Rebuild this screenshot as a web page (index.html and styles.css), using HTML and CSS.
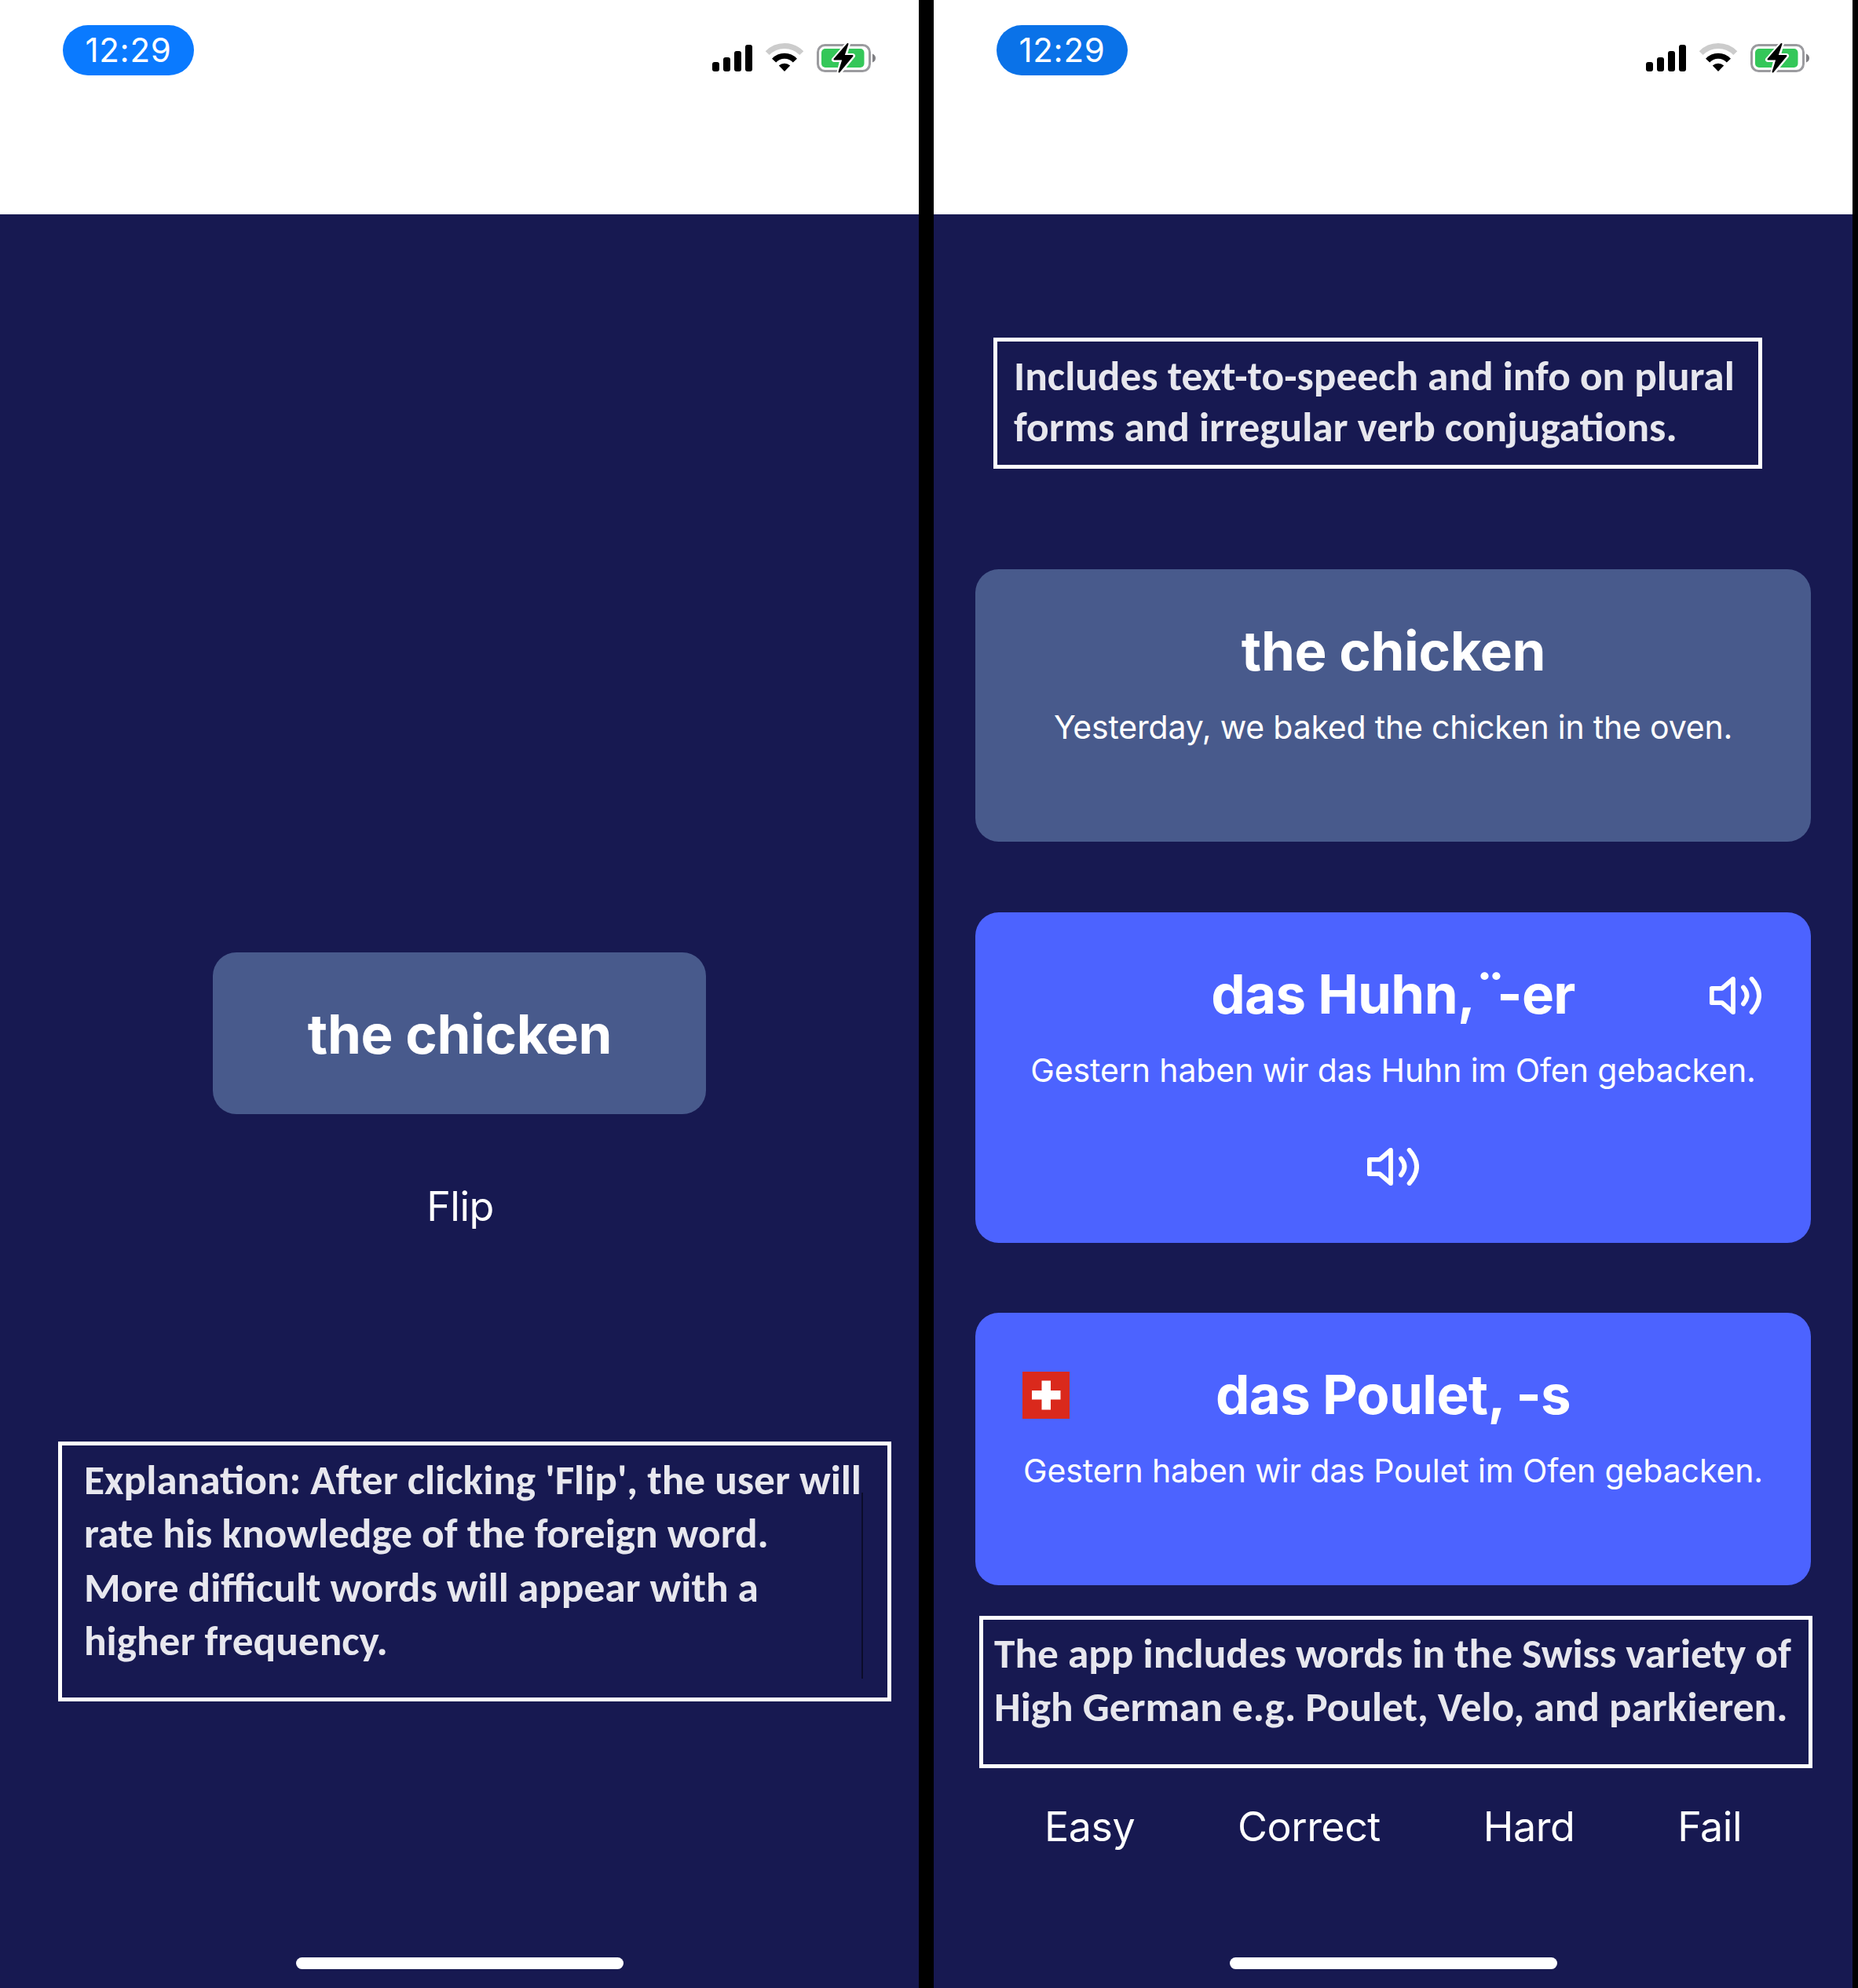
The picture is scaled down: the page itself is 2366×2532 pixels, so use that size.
FILE: index.html
```html
<!DOCTYPE html>
<html lang="en">
<head>
<meta charset="utf-8">
<title>Flashcards</title>
<link rel="stylesheet" href="styles.css">
</head>
<body>
<svg class="defs" aria-hidden="true">
  <symbol id="status" viewBox="905 52 212 44">
    <rect x="907" y="79" width="9" height="12" rx="3"/>
    <rect x="921" y="73" width="9" height="18" rx="3"/>
    <rect x="935" y="65" width="9" height="26" rx="3"/>
    <rect x="949" y="57" width="9" height="34" rx="3"/>
    <path d="M977.2 67.6a30.6 30.6 0 0 1 43.6 0" fill="none" stroke="#cccccc" stroke-width="7"/>
    <path d="M985.6 77.2a18.2 18.2 0 0 1 26.8 0" fill="none" stroke="#000" stroke-width="7"/>
    <path d="M999 91l-7.2-7.4a10.4 10.4 0 0 1 14.4 0z"/>
    <rect x="1041.5" y="57.5" width="66" height="33" rx="9" fill="none" stroke="#9b9b9f" stroke-width="3"/>
    <path d="M1111 68.500q4 1.500 4 5.500t-4 5.500z" fill="#808084"/>
    <rect x="1046" y="62" width="54.500" height="24" rx="5" fill="#34c759"/>
    <path d="M1080 55.500 1062 76h10.500l-4 16.500L1086 71h-10.500z" stroke="#fff" stroke-width="6" stroke-linejoin="round"/>
    <path d="M1079.500 56 1062.500 75.500h11l-5 16L1085.500 71h-11z" stroke="#000" stroke-width="2" stroke-linejoin="round"/>
  </symbol>
  <symbol id="speaker" viewBox="17 14 66 48">
    <g fill="none" stroke="#fff" stroke-width="5.800" stroke-linecap="round" stroke-linejoin="round">
      <path d="M19.800 28.800H33L47 16.800V59.200L33 47.200H19.800z"/>
      <path d="M60 27.500Q69 38 60 48.500"/>
      <path d="M70.600 16.800Q89.500 38 70.600 59.200"/>
    </g>
  </symbol>
</svg>
<div class="board">
  <section class="phone">
    <header class="statusbar">
      <span class="time">12:29</span>
      <svg class="status-icons"><use href="#status"/></svg>
    </header>
    <div class="card card-prompt">
      <h2 class="word">the chicken</h2>
    </div>
    <button class="action flip">Flip</button>
    <p class="note note-flip">Explanation: After clicking 'Flip', the user will<br>rate his knowledge of the foreign word.<br>More difficult words will appear with a<br>higher frequency.<i class="caret"></i></p>
    <div class="home"></div>
  </section>
  <section class="phone">
    <header class="statusbar">
      <span class="time time-dim">12:29</span>
      <svg class="status-icons"><use href="#status"/></svg>
    </header>
    <p class="note note-speech">Includes text-to-speech and info on plural<br>forms and irregular verb conjugations.</p>
    <div class="card">
      <h2 class="word">the chicken</h2>
      <p class="example example-english">Yesterday, we baked the chicken in the oven.</p>
    </div>
    <div class="card card-answer">
      <div class="headline">
        <span></span>
        <h2 class="word">das Huhn, <span class="umlaut">¨</span>-er</h2>
        <svg class="speaker speaker-word"><use href="#speaker"/></svg>
      </div>
      <p class="example">Gestern haben wir das Huhn im Ofen gebacken.</p>
      <svg class="speaker speaker-example"><use href="#speaker"/></svg>
    </div>
    <div class="card card-answer">
      <div class="headline">
        <svg class="flag" viewBox="0 0 60 60"><path fill="#da291c" d="M0 0h60v60H0z"/><path fill="#fff" d="M24.500 11.500h11.500v12.500h12.500v11.500H36v13H24.500v-13H12V24h12.500z"/></svg>
        <h2 class="word">das Poulet, -s</h2>
        <span></span>
      </div>
      <p class="example">Gestern haben wir das Poulet im Ofen gebacken.</p>
    </div>
    <p class="note note-swiss">The app includes words in the Swiss variety of<br>High German e.g. Poulet, Velo, and parkieren.</p>
    <nav class="ratings">
      <button class="action">Easy</button>
      <button class="action">Correct</button>
      <button class="action">Hard</button>
      <button class="action">Fail</button>
    </nav>
    <div class="home"></div>
  </section>
</div>
</body>
</html>
```
FILE: styles.css
```css
* { box-sizing: border-box; margin: 0; }
body { background: #000; font-family: Inter, "Liberation Sans", sans-serif; color: #fff; }
.defs { display: none; }
.board { display: grid; grid-template-columns: 1170px 1170px; gap: 19px; height: 2532px; }
.phone { display: flex; flex-direction: column; align-items: center; background: #171951; padding-bottom: 24px; }

.statusbar { display: flex; justify-content: space-between; align-items: flex-start; align-self: stretch; height: 273px; padding: 32px 53px 0 80px; background: #fff; }
.time { width: 167px; height: 64px; border-radius: 32px; background: #0a7aff; font-size: 42px; line-height: 64px; letter-spacing: .7px; text-align: center; }
.time-dim { background: #0a72e8; }
.status-icons { width: 212px; height: 44px; margin-top: 20px; }

.card { width: 1064px; height: 347px; padding: 62px 60px 0; border-radius: 30px; background: #485a8c; text-align: center; margin-bottom: 90px; }
.card-answer { background: #4c63ff; height: 421px; margin-bottom: 89px; }
.card-answer + .card-answer { height: 347px; margin-bottom: 39px; }
.card-prompt { width: 628px; height: 206px; margin: 940px 0 86px; }
.word { font-size: 69px; font-weight: 700; line-height: 84px; letter-spacing: -.35px; white-space: nowrap; }
.card > .word { padding-left: 1px; }
.headline .word { letter-spacing: -.65px; }
.umlaut { margin: 0 -12.500px 0 -15.500px; }
.example { margin: 30px -40px 0; font-size: 41px; line-height: 50px; letter-spacing: -.11px; white-space: nowrap; }
.example-english { letter-spacing: -.2px; }
.headline { display: grid; grid-template-columns: 1fr auto 1fr; align-items: center; }
.speaker { width: 66px; height: 48px; }
.speaker-word { justify-self: end; margin: 4px 3px 0 0; }
.speaker-example { display: block; margin: 74px auto 0; }
.flag { width: 60px; height: 60px; margin-top: 2px; }

.note { border: 5px solid #fff; color: #e7e7ee; font-family: Calibri, Carlito, Lato, sans-serif; font-size: 53.330px; font-weight: 700; white-space: nowrap; align-self: flex-start; }
.note-flip { position: relative; width: 1061px; height: 331px; margin-left: 74px; padding: 10px 0 0 28px; line-height: 68.300px; }
.note-speech { width: 979px; height: 167px; margin: 157px 0 128px 76px; padding: 11px 0 0 21px; line-height: 65px; }
.note-swiss { width: 1061px; height: 194px; margin: 0 0 43px 58px; padding: 9px 0 0 14px; line-height: 68px; }
.caret { position: absolute; top: 60px; right: 31px; width: 2px; height: 237px; background: #0b0c2a; }

.action { border: 0; padding: 0; background: none; color: inherit; font: 400 52px/64px Inter, "Liberation Sans", sans-serif; letter-spacing: -.5px; }
.flip { margin: 0 0 267px 2px; }
.ratings { display: flex; justify-content: space-between; align-self: stretch; padding: 0 141px; }
.home { width: 417px; height: 15px; margin-top: auto; border-radius: 8px; background: #fff; }
```
